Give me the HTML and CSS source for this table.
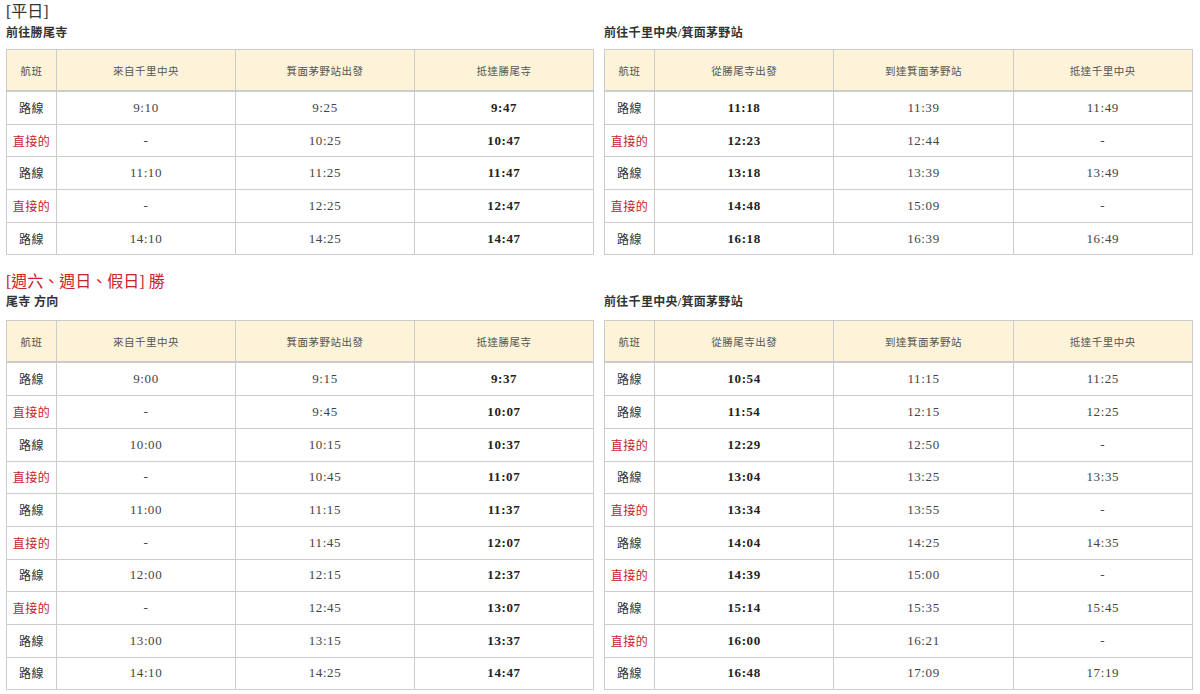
FILE: index.html
```html
<!DOCTYPE html>
<html lang="zh-Hant">
<head>
<meta charset="utf-8">
<title>時刻表</title>
<link rel="stylesheet" href="styles.css">
</head>
<body>
<div class="page">
  <section class="block">
    <h3 class="title">[平日]</h3>
    <div class="grid">
      <div class="col">
        <h4 class="sub">前往勝尾寺</h4>
        <table class="tt">
          <colgroup><col class="c1"><col><col><col></colgroup>
          <thead><tr><th>航班</th><th>來自千里中央</th><th>箕面茅野站出發</th><th>抵達勝尾寺</th></tr></thead>
          <tbody>
            <tr><td>路線</td><td>9:10</td><td>9:25</td><td class="b">9:47</td></tr>
            <tr><td class="red">直接的</td><td>-</td><td>10:25</td><td class="b">10:47</td></tr>
            <tr><td>路線</td><td>11:10</td><td>11:25</td><td class="b">11:47</td></tr>
            <tr><td class="red">直接的</td><td>-</td><td>12:25</td><td class="b">12:47</td></tr>
            <tr><td>路線</td><td>14:10</td><td>14:25</td><td class="b">14:47</td></tr>
          </tbody>
        </table>
      </div>
      <div class="col">
        <h4 class="sub">前往千里中央/箕面茅野站</h4>
        <table class="tt">
          <colgroup><col class="c1"><col><col><col></colgroup>
          <thead><tr><th>航班</th><th>從勝尾寺出發</th><th>到達箕面茅野站</th><th>抵達千里中央</th></tr></thead>
          <tbody>
            <tr><td>路線</td><td class="b">11:18</td><td>11:39</td><td>11:49</td></tr>
            <tr><td class="red">直接的</td><td class="b">12:23</td><td>12:44</td><td>-</td></tr>
            <tr><td>路線</td><td class="b">13:18</td><td>13:39</td><td>13:49</td></tr>
            <tr><td class="red">直接的</td><td class="b">14:48</td><td>15:09</td><td>-</td></tr>
            <tr><td>路線</td><td class="b">16:18</td><td>16:39</td><td>16:49</td></tr>
          </tbody>
        </table>
      </div>
    </div>
  </section>

  <section class="block second">
    <h3 class="title red">[週六、週日、假日] 勝</h3>
    <div class="grid">
      <div class="col">
        <h4 class="sub">尾寺 方向</h4>
        <table class="tt">
          <colgroup><col class="c1"><col><col><col></colgroup>
          <thead><tr><th>航班</th><th>來自千里中央</th><th>箕面茅野站出發</th><th>抵達勝尾寺</th></tr></thead>
          <tbody>
            <tr><td>路線</td><td>9:00</td><td>9:15</td><td class="b">9:37</td></tr>
            <tr><td class="red">直接的</td><td>-</td><td>9:45</td><td class="b">10:07</td></tr>
            <tr><td>路線</td><td>10:00</td><td>10:15</td><td class="b">10:37</td></tr>
            <tr><td class="red">直接的</td><td>-</td><td>10:45</td><td class="b">11:07</td></tr>
            <tr><td>路線</td><td>11:00</td><td>11:15</td><td class="b">11:37</td></tr>
            <tr><td class="red">直接的</td><td>-</td><td>11:45</td><td class="b">12:07</td></tr>
            <tr><td>路線</td><td>12:00</td><td>12:15</td><td class="b">12:37</td></tr>
            <tr><td class="red">直接的</td><td>-</td><td>12:45</td><td class="b">13:07</td></tr>
            <tr><td>路線</td><td>13:00</td><td>13:15</td><td class="b">13:37</td></tr>
            <tr><td>路線</td><td>14:10</td><td>14:25</td><td class="b">14:47</td></tr>
          </tbody>
        </table>
      </div>
      <div class="col">
        <h4 class="sub">前往千里中央/箕面茅野站</h4>
        <table class="tt">
          <colgroup><col class="c1"><col><col><col></colgroup>
          <thead><tr><th>航班</th><th>從勝尾寺出發</th><th>到達箕面茅野站</th><th>抵達千里中央</th></tr></thead>
          <tbody>
            <tr><td>路線</td><td class="b">10:54</td><td>11:15</td><td>11:25</td></tr>
            <tr><td>路線</td><td class="b">11:54</td><td>12:15</td><td>12:25</td></tr>
            <tr><td class="red">直接的</td><td class="b">12:29</td><td>12:50</td><td>-</td></tr>
            <tr><td>路線</td><td class="b">13:04</td><td>13:25</td><td>13:35</td></tr>
            <tr><td class="red">直接的</td><td class="b">13:34</td><td>13:55</td><td>-</td></tr>
            <tr><td>路線</td><td class="b">14:04</td><td>14:25</td><td>14:35</td></tr>
            <tr><td class="red">直接的</td><td class="b">14:39</td><td>15:00</td><td>-</td></tr>
            <tr><td>路線</td><td class="b">15:14</td><td>15:35</td><td>15:45</td></tr>
            <tr><td class="red">直接的</td><td class="b">16:00</td><td>16:21</td><td>-</td></tr>
            <tr><td>路線</td><td class="b">16:48</td><td>17:09</td><td>17:19</td></tr>
          </tbody>
        </table>
      </div>
    </div>
  </section>
</div>
</body>
</html>
```

FILE: styles.css
```css
html, body {
  margin: 0;
  padding: 0;
  background: #ffffff;
}

body {
  font-family: "Liberation Serif", "Noto Sans CJK TC", serif;
  color: #333333;
}

.page {
  padding: 2px 6px 0 6px;
}

.title {
  margin: 0;
  font-size: 16px;
  line-height: 20px;
  font-weight: normal;
  color: #333333;
}

.title.red {
  color: #c8222c;
}

.second {
  margin-top: 17px;
}

.grid {
  display: grid;
  grid-template-columns: 588px 589px;
  column-gap: 10px;
}

.col {
  display: flex;
  flex-direction: column;
}

.sub {
  margin: 3px 0 8px 0;
  font-size: 12px;
  line-height: 16px;
  font-weight: bold;
  color: #333333;
  letter-spacing: 0.3px;
}

.second .sub {
  margin-top: 2px;
  margin-bottom: 10px;
}

.tt {
  width: 100%;
  border-collapse: collapse;
  table-layout: fixed;
  border: 1px solid #cccccc;
}

.tt col.c1 {
  width: 50px;
}

.tt th,
.tt td {
  border: 1px solid #cccccc;
  text-align: center;
  padding: 0;
}

.tt th {
  background: #fdf3d8;
  height: 40px;
  font-size: 10.5px;
  font-weight: normal;
  letter-spacing: 0.5px;
  color: #555555;
  border-bottom: 2px solid #cccccc;
}

.tt td {
  height: 31.7px;
  font-size: 13px;
  letter-spacing: 0.6px;
  color: #444444;
}

.tt td:first-child {
  font-size: 12px;
  letter-spacing: 0.5px;
  color: #333333;
}

.tt td.b {
  font-weight: bold;
  color: #222222;
}

.tt td.red,
.tt td.red:first-child {
  color: #c8222c;
}
```
